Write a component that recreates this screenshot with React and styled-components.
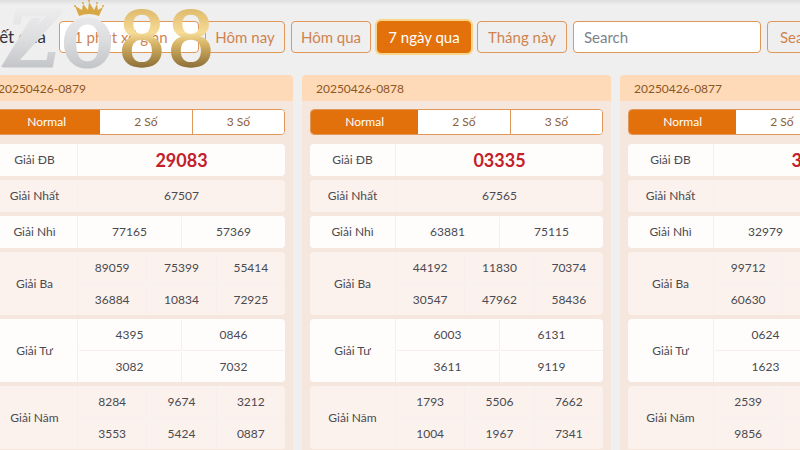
import React from "react";
import styled, { createGlobalStyle, css } from "styled-components";

const Global = createGlobalStyle`
  *, *::before, *::after { box-sizing: border-box; }
  body { margin: 0; background: #efefef; overflow: hidden; }
  body, button, input, select, table { font-family: Lato, "Open Sans", sans-serif; }
`;

const Page = styled.main`
  position: relative;
  display: flex;
  flex-direction: column;
  height: 100vh;
  overflow: hidden;
  color: #4a4a50;
  background: linear-gradient(#dedede, #efefef 5px);
`;

const Toolbar = styled.header`
  display: flex;
  align-items: center;
  gap: 6px;
  margin: 21px -37px 22px -16px;
`;

const Title = styled.h1`
  flex: 0 0 69px;
  margin: 0;
  padding-right: 7px;
  font-size: 17px;
  font-weight: 400;
  line-height: 32px;
  white-space: nowrap;
  text-align: right;
  color: #33333b;
`;

const control = css`
  height: 32px;
  border: 1px solid #e0975a;
  border-radius: 4px;
  font-size: 15px;
  color: #cf8350;
`;

const PeriodSelect = styled.select`
  ${control}
  flex: 0 0 140px;
  padding: 0 14px;
  appearance: none;
  background: #fff;
`;

const Button = styled.button`
  ${control}
  flex: 0 0 ${(p) => p.$width}px;
  padding: 0;
  white-space: nowrap;
  background: transparent;
  ${(p) =>
    p.$active &&
    css`
      color: #fff;
      background: #e3710b;
      border-color: #e3710b;
      box-shadow: 0 0 0 2px #f8d488;
    `}
`;

const SearchInput = styled.input`
  ${control}
  flex: 1 1 100px;
  min-width: 0;
  padding: 0 10px;
  background: #fff;
  &::placeholder { color: #7b828b; opacity: 1; }
`;

const Board = styled.div`
  flex: 1;
  display: grid;
  grid-template-columns: repeat(3, 1fr);
  gap: 9px;
  margin: 0 -129px 0 -16px;
`;

const Card = styled.section`
  border-radius: 4px 4px 0 0;
  overflow: hidden;
  background: #f5e7dd;
`;

const CardTitle = styled.h2`
  margin: 0;
  padding: 1px 14px 0;
  font-size: 12px;
  font-weight: 400;
  line-height: 25px;
  color: #8d571f;
  background: #fedab8;
`;

const CardBody = styled.div`
  padding: 8px;
`;

const Tabs = styled.div`
  display: grid;
  grid-template-columns: 108fr 92fr 93fr;
  height: 26px;
  margin-bottom: 9px;
  border: 1px solid #e0975a;
  border-radius: 4px;
  overflow: hidden;
  background: #fff;
`;

const Tab = styled.button`
  padding: 0 0 2px;
  border: 0;
  font-size: 12px;
  color: ${(p) => (p.$active ? "#fff" : "#8d6038")};
  background: ${(p) => (p.$active ? "#e3710b" : "#fff")};
  & + & + & { border-left: 1px solid #e0975a; }
`;

const Results = styled.table`
  display: block;
  font-size: 12px;
`;

const Rows = styled.tbody`
  display: grid;
  gap: 4px;
`;

const Row = styled.tr`
  display: grid;
  grid-template-columns: 86px 1fr;
  border-radius: 4px;
  overflow: hidden;
  background: #fefdfc;
  &:nth-child(even) { background: #fbf2ed; }
`;

const Prize = styled.th`
  display: grid;
  place-items: center;
  padding: 0 0 1px;
  font-weight: 400;
  border-right: 1px solid #f6efeb;
`;

const Numbers = styled.td`
  display: grid;
  grid-template-columns: repeat(${(p) => p.$cols}, 1fr);
  gap: 1px;
  padding: 0;
  min-height: 32px;
`;

const Value = styled.span`
  display: grid;
  place-items: center;
  min-height: 31px;
  padding-bottom: 1px;
  box-shadow: 1px 1px 0 #f6efeb;
  ${(p) =>
    p.$top &&
    css`
      font-size: 18px;
      line-height: 22px;
      font-weight: 700;
      color: #c3202a;
    `}
`;

const Logo = styled.svg`
  position: absolute;
  top: 0;
  left: 0;
  width: 220px;
  height: 74px;
  pointer-events: none;
`;

const draws = [
  {
    id: "20250426-0879",
    prizes: [["29083"], ["67507"], ["77165", "57369"], ["89059", "75399", "55414", "36884", "10834", "72925"], ["4395", "0846", "3082", "7032"], ["8284", "9674", "3212", "3553", "5424", "0887"]],
  },
  {
    id: "20250426-0878",
    prizes: [["03335"], ["67565"], ["63881", "75115"], ["44192", "11830", "70374", "30547", "47962", "58436"], ["6003", "6131", "3611", "9119"], ["1793", "5506", "7662", "1004", "1967", "7341"]],
  },
  {
    id: "20250426-0877",
    prizes: [["38162"], [""], ["32979", ""], ["99712", "", "", "60630", "", ""], ["0624", "", "1623", ""], ["2539", "", "", "9856", "", ""]],
  },
];

const prizeRows = [
  { name: "Giải ĐB", cols: 1 },
  { name: "Giải Nhất", cols: 1 },
  { name: "Giải Nhì", cols: 2 },
  { name: "Giải Ba", cols: 3 },
  { name: "Giải Tư", cols: 2 },
  { name: "Giải Năm", cols: 3 },
];

function DrawCard({ draw }) {
  return (
    <Card>
      <CardTitle>{draw.id}</CardTitle>
      <CardBody>
        <Tabs>
          <Tab $active>Normal</Tab>
          <Tab>2 Số</Tab>
          <Tab>3 Số</Tab>
        </Tabs>
        <Results aria-label={draw.id}>
          <Rows>
            {prizeRows.map((prize, i) => (
              <Row key={prize.name}>
                <Prize scope="row">{prize.name}</Prize>
                <Numbers $cols={prize.cols}>
                  {draw.prizes[i].map((n, j) => (
                    <Value key={j} $top={i === 0}>{n}</Value>
                  ))}
                </Numbers>
              </Row>
            ))}
          </Rows>
        </Results>
      </CardBody>
    </Card>
  );
}

function BrandLogo() {
  return (
    <Logo viewBox="0 0 220 74" role="img" aria-label="ZO88">
      <defs>
        <linearGradient id="gold" gradientUnits="userSpaceOnUse" x1="0" y1="9" x2="0" y2="68">
          <stop offset="0" stopColor="#dfba6c" />
          <stop offset="0.4" stopColor="#f6dc98" />
          <stop offset="0.6" stopColor="#d5b264" />
          <stop offset="1" stopColor="#8c6e36" />
        </linearGradient>
        <linearGradient id="silver" gradientUnits="userSpaceOnUse" x1="0" y1="9" x2="0" y2="68">
          <stop offset="0" stopColor="#ececed" />
          <stop offset="0.5" stopColor="#dddee0" />
          <stop offset="1" stopColor="#c4c5c8" />
        </linearGradient>
      </defs>
      <g fontFamily="'DejaVu Serif', serif">
        <path d="M1 67L31 18H42L12 67Z" fill="url(#silver)" />
        <text x="7" y="66" fontSize="76" fontStyle="italic" fill="url(#silver)" stroke="url(#silver)" strokeWidth="3">Z</text>
        <text x="61" y="66" fontSize="88" fill="url(#silver)" stroke="url(#silver)" strokeWidth="3">o</text>
        <g fill="url(#gold)" stroke="url(#gold)" strokeWidth="2" fontSize="75">
          <text x="118" y="66">8</text>
          <text x="167" y="66">8</text>
        </g>
      </g>
      <g fill="#d9a846">
        <path d="M79 16L75 6L82 10L83 4L88 10L89 2L94 10L97 4L98 10L103 7L99 16Q89 12 79 16Z" />
        <circle cx="75" cy="6" r="1" />
        <circle cx="83" cy="3" r="1" />
        <circle cx="89" cy="1" r="1" />
        <circle cx="97" cy="3" r="1" />
        <circle cx="103" cy="6" r="1" />
      </g>
    </Logo>
  );
}

export default function App() {
  return (
    <>
      <Global />
      <Page>
        <Toolbar>
          <Title>Kết quả</Title>
          <PeriodSelect aria-label="Loại xổ số" defaultValue="1">
            <option value="1">1 phút xổ gian</option>
          </PeriodSelect>
          <Button $width={80}>Hôm nay</Button>
          <Button $width={80}>Hôm qua</Button>
          <Button $width={94} $active>7 ngày qua</Button>
          <Button $width={90}>Tháng này</Button>
          <SearchInput type="search" aria-label="Search" placeholder="Search" />
          <Button $width={70}>Search</Button>
        </Toolbar>
        <Board>
          {draws.map((d) => <DrawCard key={d.id} draw={d} />)}
        </Board>
        <BrandLogo />
      </Page>
    </>
  );
}
